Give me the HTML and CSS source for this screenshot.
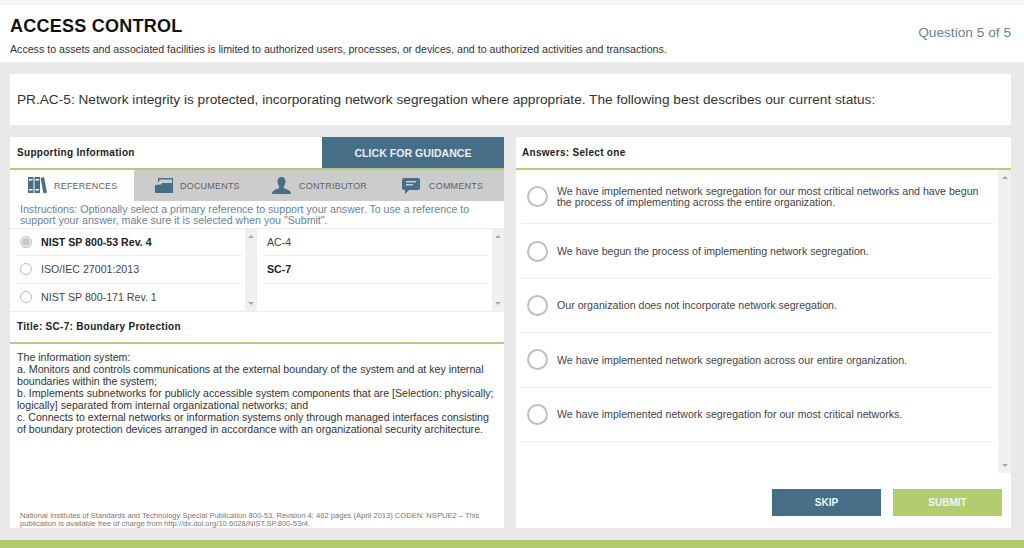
FILE: index.html
```html
<!DOCTYPE html>
<html lang="en">
<head>
<meta charset="utf-8">
<title>Access Control</title>
<link rel="stylesheet" href="styles.css">
</head>
<body>
<div class="page">
  <header class="header">
    <div>
      <h1 class="title">ACCESS CONTROL</h1>
      <p class="subtitle">Access to assets and associated facilities is limited to authorized users, processes, or devices, and to authorized activities and transactions.</p>
    </div>
    <div class="progress">Question 5 of 5</div>
  </header>
  <section class="question">PR.AC-5: Network integrity is protected, incorporating network segregation where appropriate. The following best describes our current status:</section>
  <main class="columns">
    <section class="panel panel-left">
      <div class="panel-head">
        <span class="panel-title">Supporting Information</span>
        <span class="guidance">CLICK FOR GUIDANCE</span>
      </div>
      <nav class="tabs">
        <div class="tab tab-active tab-refs">
          <svg class="tab-icon" viewBox="0 0 19 17" width="19" height="17"><path fill-rule="evenodd" d="M0 0h5.500v16H0zM1 2v1.500h3.500V2zM1 12v1.500h3.500V12zM6.500 0H12v16H6.500zM7.500 2v1.500H11V2zM7.500 12v1.500H11V12zM12.500 1l3.500-1 3 15.500-3.500 1z"/></svg>
          <span>REFERENCES</span>
        </div>
        <div class="tab tab-docs">
          <svg class="tab-icon" viewBox="0 0 18 15" width="18" height="15"><path d="M3 0h15v15H1a1 1 0 0 1-1-1V7l6-.5L7 5h10V1.500H4.500L4 4H3z"/></svg>
          <span>DOCUMENTS</span>
        </div>
        <div class="tab tab-contrib">
          <svg class="tab-icon" viewBox="0 0 19 17" width="19" height="17"><path d="M9.500 0c2.500 0 4 1.800 4 4.500S12 9 11.700 10c0 1 .8 1.500 3 2.300 2.500.9 4.300 2 4.300 4.700H0c0-2.700 1.800-3.800 4.300-4.700 2.200-.8 3-1.300 3-2.300C7 9 5.500 7.200 5.500 4.500S7 0 9.500 0z"/></svg>
          <span>CONTRIBUTOR</span>
        </div>
        <div class="tab tab-comments">
          <svg class="tab-icon" viewBox="0 0 18 16" width="18" height="16"><path fill-rule="evenodd" d="M2 0h14a2 2 0 0 1 2 2v8a2 2 0 0 1-2 2H7l-4 4v-4H2a2 2 0 0 1-2-2V2a2 2 0 0 1 2-2zM4 3v1.500h10V3zM4 6v1.500h7V6z"/></svg>
          <span>COMMENTS</span>
        </div>
      </nav>
      <p class="instructions">Instructions: Optionally select a primary reference to support your answer. To use a reference to support your answer, make sure it is selected when you "Submit".</p>
      <div class="lists">
        <div class="list list-one">
          <ul class="rows">
            <li class="row row-strong"><span class="radio radio-on"></span>NIST SP 800-53 Rev. 4</li>
            <li class="row"><span class="radio"></span>ISO/IEC 27001:2013</li>
            <li class="row row-end"><span class="radio"></span>NIST SP 800-171 Rev. 1</li>
          </ul>
          <div class="scrollbar"><i class="arrow-up"></i><i class="arrow-down"></i></div>
        </div>
        <div class="list list-two">
          <ul class="rows rows-plain">
            <li class="row">AC-4</li>
            <li class="row row-strong">SC-7</li>
          </ul>
          <div class="scrollbar"><i class="arrow-up"></i><i class="arrow-down"></i></div>
        </div>
      </div>
      <div class="ref-title">Title: SC-7: Boundary Protection</div>
      <div class="ref-body">
        <p class="ref-text">The information system:<br>a. Monitors and controls communications at the external boundary of the system and at key internal boundaries within the system;<br>b. Implements subnetworks for publicly accessible system components that are [Selection: physically; logically] separated from internal organizational networks; and<br>c. Connects to external networks or information systems only through managed interfaces consisting of boundary protection devices arranged in accordance with an organizational security architecture.</p>
        <p class="footnote">National Institutes of Standards and Technology Special Publication 800-53, Revision 4; 462 pages (April 2013) CODEN: NSPUE2 – This publication is available free of charge from http://dx.doi.org/10.6028/NIST.SP.800-53r4.</p>
      </div>
    </section>
    <section class="panel panel-right">
      <div class="panel-head"><span class="panel-title panel-title-answers">Answers: Select one</span></div>
      <div class="answers-wrap">
        <ul class="answers">
          <li class="answer"><span class="radio radio-big"></span><span>We have implemented network segregation for our most critical networks and have begun the process of implementing across the entire organization.</span></li>
          <li class="answer"><span class="radio radio-big"></span><span>We have begun the process of implementing network segregation.</span></li>
          <li class="answer"><span class="radio radio-big"></span><span>Our organization does not incorporate network segregation.</span></li>
          <li class="answer"><span class="radio radio-big"></span><span>We have implemented network segregation across our entire organization.</span></li>
          <li class="answer"><span class="radio radio-big"></span><span>We have implemented network segregation for our most critical networks.</span></li>
        </ul>
        <div class="scrollbar"><i class="arrow-up"></i><i class="arrow-down"></i></div>
      </div>
      <div class="actions">
        <button class="btn btn-skip">SKIP</button>
        <button class="btn btn-submit">SUBMIT</button>
      </div>
    </section>
  </main>
  <div class="footer-bar"></div>
</div>
</body>
</html>
```

FILE: styles.css
```css
* { box-sizing: border-box; }
html, body { margin: 0; padding: 0; }
body { width: 1024px; height: 548px; overflow: hidden; background: #e9e9e9; font-family: "Liberation Sans", Arial, sans-serif; color: #333; }
ul { list-style: none; margin: 0; padding: 0; }
p { margin: 0; }
.page { display: flex; flex-direction: column; height: 548px; border-top: 5px solid #f3f3f3; }
.header { height: 57px; background: #fff; display: flex; justify-content: space-between; padding: 11px 13px 0 10px; flex: none; }
.title { margin: 0; font-size: 18px; line-height: 21px; font-weight: 700; color: #111; letter-spacing: .25px; }
.subtitle { margin-top: 6px; font-size: 10.630px; line-height: 12px; color: #333; }
.progress { font-size: 13.700px; line-height: 16px; margin-top: 9px; color: #668494; }
.question { margin: 12px 13px 12px 10px; height: 51px; background: #fff; padding: 0 7px; display: flex; align-items: center; font-size: 13.670px; color: #333; flex: none; }
.columns { display: flex; gap: 12px; margin: 0 13px 0 10px; height: 391px; flex: none; }
.panel { background: #fff; display: flex; flex-direction: column; }
.panel-left { width: 494px; }
.panel-right { width: 495px; }
.panel-head { height: 33px; border-bottom: 2px solid #b5cb84; display: flex; justify-content: space-between; align-items: stretch; flex: none; }
.panel-title { font-size: 10px; font-weight: 700; color: #222; padding: 9px 0 0 7px; line-height: 13px; letter-spacing: .3px; }
.panel-title-answers { padding-left: 6px; }
.guidance { width: 182px; background: #466f87; color: #e8eef1; font-size: 10.600px; font-weight: 700; display: flex; align-items: center; justify-content: center; }
.tabs { display: flex; height: 31px; background: #ccc; flex: none; }
.tab { display: flex; align-items: center; font-size: 9px; color: #5d6468; letter-spacing: .2px; }
.tab-icon { fill: #466f87; flex: none; }
.tab-active { background: #fff; }
.tab-refs { width: 124px; padding-left: 18px; gap: 7px; }
.tab-docs { width: 124px; padding-left: 21px; gap: 7px; }
.tab-contrib { width: 130px; padding-left: 14px; gap: 8px; }
.tab-comments { flex: 1; padding-left: 14px; gap: 9px; }
.instructions { height: 28px; padding: 3px 30px 0 10px; font-size: 10.630px; line-height: 10.500px; color: #6a8494; border-bottom: 1px solid #eee; flex: none; }
.lists { display: flex; height: 82px; flex: none; }
.list { width: 247px; display: flex; }
.rows { flex: 1; }
.row { height: 27.300px; display: flex; align-items: center; margin: 0 3px 0 5px; padding-left: 5px; gap: 9px; font-size: 10.630px; color: #444; border-bottom: 1px solid #eee; }
.rows-plain .row { margin: 0 4px 0 6px; padding-left: 4px; }
.row-end { border-bottom: 0; }
.row-strong { font-weight: 700; color: #222; }
.radio { width: 12px; height: 12px; border-radius: 50%; border: 1px solid #bbb; background: #fff; flex: none; }
.radio-on { background: #c9c9c9; box-shadow: inset 0 0 0 1px #fff; border-color: #c4c4c4; }
.radio-big { width: 21px; height: 21px; border: 2px solid #bfbfbf; }
.scrollbar { width: 12px; background: #f0f0f0; flex: none; display: flex; flex-direction: column; justify-content: space-between; align-items: center; padding: 6px 0; }
.arrow-up { width: 0; height: 0; border: 3px solid transparent; border-top: 0; border-bottom: 3px solid #aaa; }
.arrow-down { width: 0; height: 0; border: 3px solid transparent; border-bottom: 0; border-top: 3px solid #aaa; }
.ref-title { height: 33px; border-top: 1px solid #eee; border-bottom: 2px solid #b5cb84; font-size: 10px; font-weight: 700; color: #222; padding: 8px 0 0 7px; line-height: 13px; letter-spacing: .3px; flex: none; }
.ref-body { flex: 1; display: flex; flex-direction: column; justify-content: space-between; padding: 7px 10px 0 7px; }
.ref-text { font-size: 10.630px; line-height: 12px; color: #333; }
.footnote { font-size: 7.580px; line-height: 8px; color: #777; padding-left: 3px; padding-right: 10px; }
.answers-wrap { display: flex; height: 303px; flex: none; }
.answers { flex: 1; padding: 0 5px; }
.answer { height: 54.400px; display: flex; align-items: center; gap: 9px; padding: 0 5px 0 6px; border-bottom: 1px solid #eee; font-size: 10.630px; line-height: 10.500px; color: #444; }
.answers-wrap .scrollbar { width: 13px; }
.actions { display: flex; justify-content: flex-end; gap: 12px; padding: 16px 9px 0 0; }
.btn { width: 109px; height: 27px; border: 0; font-family: inherit; font-size: 10px; font-weight: 700; color: #f0f4f5; padding: 0; }
.btn-skip { background: #466f87; }
.btn-submit { background: #b1cd70; }
.footer-bar { margin-top: 12px; height: 8px; background: #afcb6e; flex: none; }
```
